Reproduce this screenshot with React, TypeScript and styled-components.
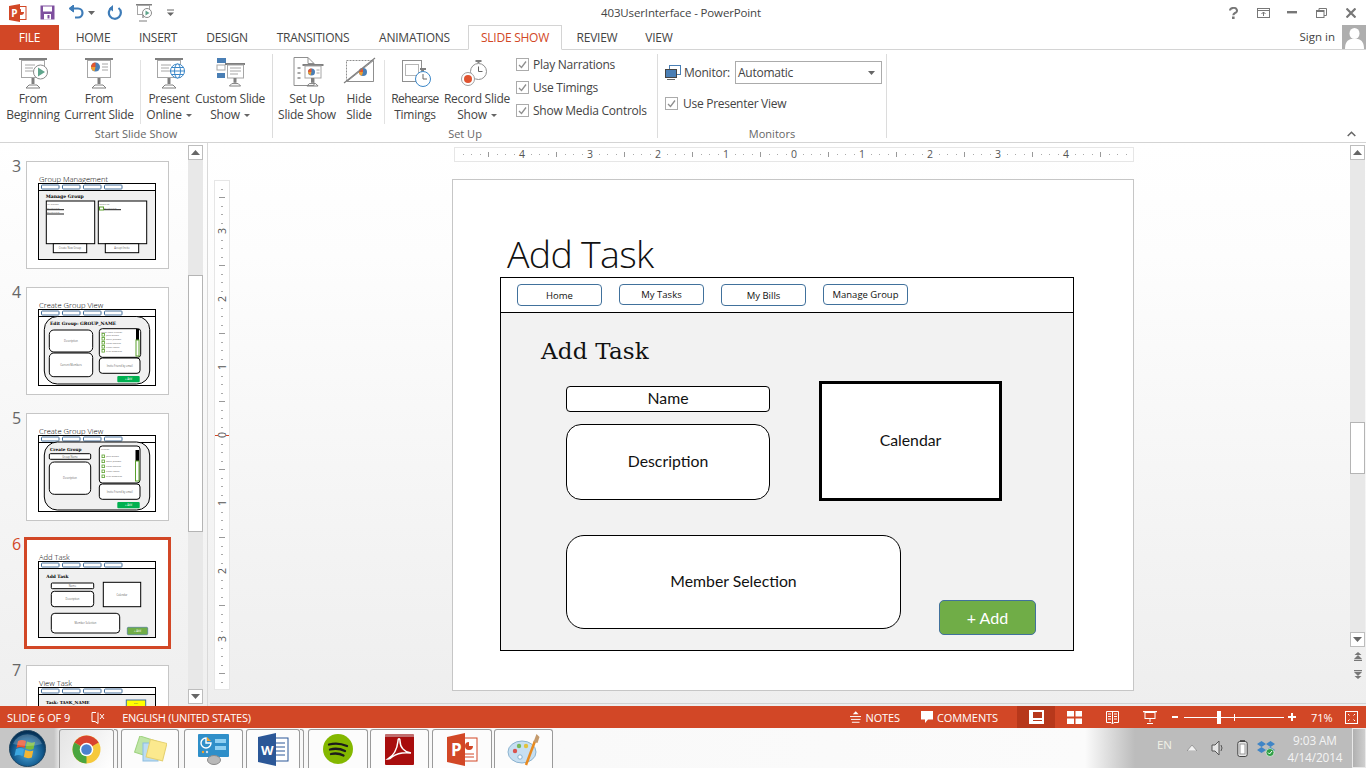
import React from "react";
import styled, { createGlobalStyle } from "styled-components";

const ORANGE = "#D24726";
const UI = `"Open Sans", "Noto Sans", "Liberation Sans", sans-serif`;

const Global = createGlobalStyle`
  html, body { margin: 0; padding: 0; overflow: hidden; background: #fff; }
  * { box-sizing: border-box; }
`;

const Page = styled.div`
  width: 1366px; height: 768px; display: flex; flex-direction: column; overflow: hidden;
  font-family: ${UI}; color: #444; background: #fff;
`;

/* Title bar */
const TitleBar = styled.div`
  height: 25px; flex: none; display: grid; grid-template-columns: 1fr auto 1fr; align-items: center;
`;
const QuickAccess = styled.div`display: flex; align-items: center; height: 25px;`;
const QuickIcon = styled.span<{ $w: number; $ml: number }>`
  display: flex; width: ${(p) => p.$w}px; margin-left: ${(p) => p.$ml}px; height: 20px; align-items: center; justify-content: center;
`;
const WindowTitle = styled.div`font-size: 11.5px; color: #444; letter-spacing: -0.14px; margin: -1px 0 0 -4px;`;
const WindowControls = styled.div`display: flex; justify-content: flex-end; align-items: center; height: 25px;`;
const ControlIcon = styled.span<{ $w: number; $ml: number }>`
  display: flex; width: ${(p) => p.$w}px; margin-left: ${(p) => p.$ml}px; justify-content: center; align-items: center;
`;

/* Tabs */
const TabBar = styled.div`
  height: 25px; flex: none; display: flex; border-bottom: 1px solid #d4d4d4; position: relative;
`;
const Tab = styled.div<{ $w: number; $active?: boolean }>`
  width: ${(p) => p.$w}px; height: 25px; display: flex; align-items: center; justify-content: center; font-size: 12px;
  color: ${(p) => (p.$active ? ORANGE : "#444")}; letter-spacing: -0.25px;
  ${(p) => p.$active && `border: 1px solid #d4d4d4; border-bottom: 1px solid #fff; background:#fff;`}
`;
const FileTab = styled(Tab)`background: ${ORANGE}; color: #fff; height: 25px;`;
const Account = styled.div`margin-left: auto; display: flex; align-items: flex-start; height: 24px; font-size: 11.5px;`;
const SignIn = styled.span`margin: 4px 7px 0 0; color: #444;`;
const Avatar = styled.span`width: 24px; height: 24px; background: #aeaeae; display: block; overflow: hidden;`;

/* Ribbon */
const Ribbon = styled.div`
  height: 93px; flex: none; display: flex; border-bottom: 1px solid #d4d4d4; position: relative;
`;
const Group = styled.div<{ $w: number }>`
  width: ${(p) => p.$w}px; height: 92px; flex: none; position: relative; display: flex; flex-direction: column;
  &::after { content: ""; position: absolute; right: 0; top: 4px; bottom: 4px; width: 1px; background: #dcdcdc; }
`;
const GroupBody = styled.div`flex: 1; display: flex; align-items: flex-start;`;
const GroupLabel = styled.div`height: 18px; font-size: 11px; text-align: center; color: #666; line-height: 20px; padding-right: 1px;`;
const BigButton = styled.div<{ $w: number }>`
  width: ${(p) => p.$w}px; flex: none; display: flex; flex-direction: column; align-items: center;
  font-size: 12px; line-height: 16px; text-align: center; color: #444; padding-top: 6px; letter-spacing: -0.25px;
`;
const BigIcon = styled.span`display: block; width: 34px; height: 34px; margin-bottom: 1px;`;
const BtnLine = styled.span<{ $tight?: boolean }>`
  display: block; white-space: nowrap; height: 16px; ${(p) => p.$tight && "letter-spacing: -0.6px;"}
`;
const Caret = styled.i`
  display: inline-block; margin-left: 4px; vertical-align: 2px; width: 0; height: 0;
  border-left: 3px solid transparent; border-right: 3px solid transparent; border-top: 3px solid #666;
`;
const RibbonSep = styled.span<{ $w: number }>`
  width: ${(p) => p.$w}px; flex: none; height: 64px; margin-top: 10px; display: flex; justify-content: center;
  &::before { content: ""; width: 1px; background: #e2e2e2; }
`;
const CheckColumn = styled.div`display: flex; flex-direction: column; gap: 7px; margin: 6px 0 0 0;`;
const CheckRow = styled.div`display: flex; align-items: center; font-size: 12px; color: #444; height: 16px; gap: 4px; letter-spacing: -0.25px; white-space: nowrap;`;
const PresenterRow = styled(CheckRow)`gap: 5px; letter-spacing: -0.28px;`;
const CheckBox = styled.span`
  width: 13px; height: 13px; flex: none; border: 1px solid #ababab; background: #fff; display: flex; align-items: center; justify-content: center;
`;
const MonitorBody = styled.div`flex: 1; padding: 11px 0 0 7px; display: flex; flex-direction: column; gap: 11px;`;
const MonitorRow = styled.div`display: flex; align-items: center; gap: 3px; font-size: 12px; height: 23px; letter-spacing: -0.25px;`;
const Select = styled.div`
  width: 147px; height: 23px; margin-left: 2px; border: 1px solid #ababab; display: flex; align-items: center; justify-content: space-between;
  padding: 0 6px 0 2px; background: #fff;
`;
const Collapse = styled.span`position: absolute; right: 10px; bottom: 5px; display: flex;`;

/* Main */
const Main = styled.div`flex: 1; min-height: 0; display: flex;`;
const ThumbPane = styled.div`
  width: 208px; flex: none; display: flex; border-right: 1px solid #d9d9d9;
  background: linear-gradient(#fff, #efefef);
`;
const ThumbList = styled.div`
  width: 188px; flex: none; padding-top: 18px; display: flex; flex-direction: column; gap: 18px; overflow: hidden;
`;
const ThumbRow = styled.div`display: flex; align-items: flex-start; flex: none; height: 108px;`;
const ThumbNo = styled.div<{ $active?: boolean }>`
  width: 26px; padding-left: 12px; font-size: 16px; line-height: 20px; margin-top: -5px; color: ${(p) => (p.$active ? ORANGE : "#666")};
`;
const Thumb = styled.div<{ $active?: boolean }>`
  width: 143px; height: 108px; background: #fff; flex: none;
  outline: ${(p) => (p.$active ? `3px solid ${ORANGE}` : "1px solid #c6c6c6")};
  outline-offset: -1px;
  & svg { display: block; }
`;
const PaneScroll = styled.div`
  width: 15px; flex: none; margin-top: 2px; height: 559px; background: #e8e8e8; display: flex; flex-direction: column;
`;
const ScrollBtn = styled.div`
  width: 15px; height: 15px; flex: none; background: #fff; border: 1px solid #bdbdbd; display: flex; align-items: center; justify-content: center;
`;
const ScrollTrack = styled.div`flex: 1; position: relative;`;
const ScrollThumb = styled.div<{ $top: number; $h: number }>`
  position: absolute; left: 0; top: ${(p) => p.$top}px; height: ${(p) => p.$h}px; width: 15px; background: #fff; border: 1px solid #b4b4b4;
`;

const Workspace = styled.div`
  flex: 1; min-width: 0; display: flex; flex-direction: column;
  background: linear-gradient(#fff 0%, #fdfdfd 20%, #eeeeee 100%);
`;
const WorkRow = styled.div`flex: 1; min-height: 0; display: flex; padding-left: 6px;`;
const VRulerBox = styled.div`width: 16px; height: 510px; margin-top: 37px; flex: none; border: 1px solid #e6e6e6; background: #fff;`;
const SlideColumn = styled.div`width: 682px; margin-left: 222px; flex: none; display: flex; flex-direction: column;`;
const HRulerBox = styled.div`width: 680px; height: 15px; margin: 4px 0 17px 2px; border: 1px solid #e6e6e6; background: #fff; flex: none;`;
const RightRail = styled.div`margin-left: auto; margin-right: 1px; width: 15px; padding-top: 2px; display: flex; flex-direction: column; align-items: center;`;
const RailTrack = styled.div`width: 15px; height: 472px; background: #e8e8e8; position: relative; flex: none;`;
const NavIcon = styled.span`display: flex; height: 18px; flex: none; align-items: center; justify-content: center;`;
const WorkRule = styled.div`height: 1px; background: #d2d2d2; margin: 0 0 2px 2px; flex: none;`;

/* Slide */
const Slide = styled.div`
  width: 682px; height: 512px; background: #fff; border: 1px solid #c6c6c6; position: relative; flex: none;
`;
const SlideTitle = styled.div`
  position: absolute; left: 54px; top: 49px; font-size: 37.5px; line-height: 50px; font-weight: 300; color: #111; letter-spacing: -0.7px;
`;
const Frame = styled.div`
  position: absolute; left: 47px; top: 97px; width: 574px; height: 374px; border: 1px solid #000; display: flex; flex-direction: column; background: #f2f2f2;
`;
const FrameNav = styled.div`
  height: 35px; flex: none; background: #fff; border-bottom: 1px solid #000; display: flex; align-items: flex-start; gap: 17px; padding: 6px 0 0 16px;
`;
const NavBtn = styled.div<{ $h: number }>`
  width: 85px; height: ${(p) => p.$h}px; border: 1px solid #41719c; border-radius: 4px; background: #fff;
  display: flex; align-items: center; justify-content: center; font: 9.5px "Open Sans", sans-serif; color: #111;
`;
const FrameBody = styled.div`flex: 1; position: relative;`;
const FrameHeading = styled.div`
  position: absolute; left: 40px; top: 21px; font: 23px/34px "DejaVu Serif", "Liberation Serif", serif; color: #111; white-space: nowrap; letter-spacing: 0.2px;
`;
const Shape = styled.div`
  position: absolute; background: #fff; border: 1px solid #000; display: flex; align-items: center; justify-content: center;
  font: 15.8px Lato, "Open Sans", sans-serif; color: #111; padding-bottom: 3px;
`;
const NameShape = styled(Shape)`left: 65px; top: 73px; width: 204px; height: 26px; border-radius: 4px;`;
const DescShape = styled(Shape)`left: 65px; top: 111px; width: 204px; height: 76px; border-radius: 15px;`;
const CalendarShape = styled(Shape)`left: 318px; top: 68px; width: 183px; height: 120px; border: 3px solid #000;`;
const MemberShape = styled(Shape)`left: 65px; top: 222px; width: 335px; height: 94px; border-radius: 18px;`;
const AddShape = styled(Shape)`
  left: 438px; top: 287px; width: 97px; height: 35px; border-radius: 5px; background: #70ad47; border: 1px solid #41719c; color: #fff; font-size: 16px;
  padding-bottom: 1px;
`;

/* Status bar */
const StatusBar = styled.div`
  height: 22px; flex: none; background: ${ORANGE}; color: #fff; display: flex; align-items: center; font-size: 11px; letter-spacing: -0.1px; white-space: nowrap;
`;
const StatusText = styled.span<{ $ml?: number }>`margin-left: ${(p) => p.$ml ?? 0}px;`;
const LangText = styled(StatusText)`letter-spacing: -0.25px;`;
const StatusIcon = styled.span<{ $ml?: number }>`display: flex; margin-left: ${(p) => p.$ml ?? 0}px;`;
const StatusRight = styled.div`margin-left: auto; display: flex; align-items: center; height: 22px; padding-right: 8px;`;
const StatusAction = styled.div<{ $mr: number }>`display: flex; align-items: center; gap: 4px; margin-right: ${(p) => p.$mr}px; width: ${(p) => (p.$mr === 21 ? 50 : 77)}px;`;
const ViewBtn = styled.div<{ $active?: boolean }>`
  width: 38px; height: 22px; display: flex; align-items: center; justify-content: center; background: ${(p) => (p.$active ? "#B7381B" : "transparent")};
`;
const ZoomMinus = styled.span`width: 6px; height: 2px; background: #fff; margin: 0 6px 0 3px;`;
const ZoomTrack = styled.div`width: 100px; height: 1px; background: #fff; position: relative;`;
const ZoomThumb = styled.span`position: absolute; left: 33px; top: -6px; width: 4px; height: 13px; background: #fff;`;
const ZoomTick = styled.span`position: absolute; left: 50px; top: -3px; width: 1px; height: 7px; background: #fff;`;
const ZoomPlus = styled.span`
  width: 8px; height: 8px; margin-left: 4px; position: relative;
  &::before { content: ""; position: absolute; left: 0; top: 3px; width: 8px; height: 2px; background: #fff; }
  &::after { content: ""; position: absolute; left: 3px; top: 0; width: 2px; height: 8px; background: #fff; }
`;
const ZoomValue = styled.span`margin-left: 15px; font-size: 11px; width: 34px;`;

/* Taskbar */
const Taskbar = styled.div`
  height: 40px; flex: none; display: flex; align-items: stretch;
  background: linear-gradient(90deg, #c6c6c6 0, #c6c6c6 54px, #f7f7f7 62px, #fbfbfb 1085px, #bcbcbc 1135px, #bcbcbc 100%);
`;
const Orb = styled.div`width: 59px; flex: none; padding: 2px 0 0 9px;`;
const TaskBtn = styled.div<{ $w: number; $ml: number; $hot?: boolean }>`
  width: ${(p) => p.$w}px; margin-left: ${(p) => p.$ml}px; flex: none; height: 39px; margin-top: 1px; border: 1px solid #9a9a9a; border-bottom: none;
  border-radius: 3px 3px 0 0; display: flex; align-items: center; justify-content: center; background: ${(p) => (p.$hot ? "linear-gradient(120deg,#e4e4e4,#fff)" : "#fcfcfc")};
  position: relative;
`;
const TaskStack = styled.span`position: absolute; right: -5px; top: -1px; bottom: 0; width: 4px; border: 1px solid #9a9a9a; border-left: none; border-bottom: none; border-radius: 0 3px 0 0;`;
const Tray = styled.div`margin-left: auto; display: flex; align-items: center; height: 40px;`;
const TrayText = styled.span`font-size: 11.5px; color: #f1f1e6; margin-right: 6px; margin-top: -7px;`;
const TrayIcon = styled.span<{ $w: number }>`display: flex; justify-content: center; width: ${(p) => p.$w}px;`;
const Clock = styled.div`width: 74px; text-align: center; font-size: 11.8px; line-height: 17px; color: #f4f4f4; padding-top: 2px; letter-spacing: -0.1px;`;
const ShowDesktop = styled.div`
  width: 14px; height: 40px; background: linear-gradient(90deg,#b0b0b0,#cfcfcf); border: 1px solid #e9e9e9;
`;

/* ---------- drawings ---------- */
const I = ({ children, w = 34, h = 34 }: { children: React.ReactNode; w?: number; h?: number }) => (
  <svg width={w} height={h} viewBox={`0 0 ${w} ${h}`} style={{ display: "block" }}>{children}</svg>
);
const Stand = ({ x = 16, y = 22, s = 1 }: { x?: number; y?: number; s?: number }) => (
  <g stroke="#7f7f7f" fill="none">
    <path d={`M${x} ${y}v${6 * s}`} strokeWidth="3" />
    <path d={`M${x - 7 * s} ${y + 10 * s}l${3 * s} -${3 * s}h${8 * s}l${3 * s} ${3 * s}z`} strokeWidth="1" />
  </g>
);
const Board = ({ lines = true }: { lines?: boolean }) => (
  <g transform="translate(1 0)">
    <rect x="2" y="2" width="28" height="2" fill="#7f7f7f" />
    <rect x="4.500" y="4.500" width="23" height="17" fill="#fff" stroke="#a6a6a6" />
    <Stand />
    {lines && <path d="M8 9h10M8 12h8M8 15h10" stroke="#a6a6a6" />}
  </g>
);
const Pie = ({ x, y, r = 4 }: { x: number; y: number; r?: number }) => (
  <g>
    <circle cx={x} cy={y} r={r} fill="#4a7fb5" />
    <path d={`M${x} ${y}V${y - r}A${r} ${r} 0 0 0 ${x - r} ${y}z`} fill="#e4572e" />
    <path d={`M${x} ${y}h-${r}A${r} ${r} 0 0 0 ${x - 1} ${y + r - 0.2}z`} fill="#f0a030" />
  </g>
);
const FromBeginningIcon = () => (
  <I>
    <Board />
    <circle cx="24.500" cy="16" r="7" fill="#fff" stroke="#8a8a8a" />
    <path d="M22 11.500l7 4.500-7 4.500z" fill="#5fa58c" />
  </I>
);
const FromCurrentIcon = () => (
  <I>
    <Board lines={false} />
    <Pie x={13.5} y={11} r={4.5} />
    <path d="M20 8h6M20 11h6M20 14h6" stroke="#a6a6a6" />
  </I>
);
const OnlineIcon = () => (
  <I>
    <Board />
    <g fill="#fff" stroke="#3b87c8">
      <circle cx="25.500" cy="15" r="7" />
      <ellipse cx="25.500" cy="15" rx="3" ry="7" />
      <path d="M18.500 15h14M19.500 11.500h12M19.500 18.500h12" />
    </g>
  </I>
);
const CustomIcon = () => (
  <I>
    <rect x="4" y="2" width="9" height="5" fill="#4a7fb5" />
    <rect x="4" y="9" width="8" height="5" fill="#fff" stroke="#a6a6a6" />
    <rect x="4" y="17" width="8" height="5" fill="#4a7fb5" />
    <rect x="12" y="7" width="20" height="2" fill="#7f7f7f" />
    <rect x="14.500" y="9" width="16" height="13" fill="#fff" stroke="#a6a6a6" />
    <path d="M17 12h11M17 15h11M17 18h8" stroke="#a6a6a6" />
    <Stand x={22} y={22} s={0.8} />
  </I>
);
const SetUpIcon = () => (
  <I>
    <g transform="translate(1.500 0)">
      <path d="M2.500 1.500h14l6 6v22h-20z" fill="#fff" stroke="#8f8f8f" />
      <path d="M16.500 1.500v6h6" fill="none" stroke="#8f8f8f" />
      <path d="M6 12h3M6 17h3M6 22h3" stroke="#a6a6a6" strokeWidth="2" />
      <rect x="11" y="8" width="21" height="2" fill="#7f7f7f" />
      <rect x="13.500" y="10" width="16" height="12" fill="#fff" stroke="#a6a6a6" />
      <Pie x={20} y={16} r={3.5} />
      <path d="M25 14h3M25 17h3" stroke="#a6a6a6" />
      <Stand x={21} y={22} s={0.8} />
    </g>
  </I>
);
const HideIcon = () => (
  <I>
    <rect x="4.500" y="4.500" width="27" height="21" fill="#fff" stroke="#8f8f8f" strokeDasharray="2 1" />
    <path d="M31.500 4.500v21H5z" fill="#fff" stroke="#8f8f8f" />
    <Pie x={21} y={16} r={4} />
    <path d="M2 27L33 2" stroke="#7f7f7f" strokeWidth="1.200" />
  </I>
);
const Watch = ({ x, y, c, r = 7.5 }: { x: number; y: number; c: string; r?: number }) => (
  <g>
    <path d={`M${x - 3} ${y - r - 2.5}h6M${x} ${y - r - 2.5}v2`} stroke="#7f7f7f" strokeWidth="2" />
    <circle cx={x} cy={y} r={r} fill="#fff" stroke={c} />
    <path d={`M${x} ${y - 5}v5h4`} fill="none" stroke="#666" />
  </g>
);
const RehearseIcon = () => (
  <I>
    <rect x="4.500" y="4.500" width="19" height="21" fill="#fff" stroke="#8f8f8f" />
    <rect x="7.500" y="8.500" width="13" height="11" fill="none" stroke="#b5b5b5" />
    <Watch x={25} y={23} c="#3b87c8" />
  </I>
);
const RecordIcon = () => (
  <I>
    <Watch x={18.5} y={15.5} c="#8f8f8f" r={8} />
    <circle cx="8" cy="23" r="6.500" fill="#fff" stroke="#9f9f9f" />
    <circle cx="8" cy="23" r="4" fill="#e0532f" />
  </I>
);
const Check = () => (
  <svg width="9" height="9" viewBox="0 0 9 9"><path d="M1 5l2.500 2.500L8 1.500" fill="none" stroke="#8e8e8e" strokeWidth="1.300" /></svg>
);
const SmallCaret = ({ c = "#666" }: { c?: string }) => (
  <svg width="7" height="4" viewBox="0 0 7 4"><path d="M0 0h7L3.500 4z" fill={c} /></svg>
);
const PptLogo = ({ s = 18 }: { s?: number }) => (
  <svg width={s} height={s} viewBox="0 0 18 18">
    <rect x="8" y="2.500" width="9" height="13" fill="#fff" stroke={ORANGE} />
    <path d="M12 5a3 3 0 1 0 3 3h-3z" fill={ORANGE} />
    <path d="M0 2l11-2v18L0 16z" fill={ORANGE} />
    <text x="2.200" y="13" fontFamily="Open Sans" fontWeight="700" fontSize="10" fill="#fff">P</text>
  </svg>
);
const SaveIcon = () => (
  <svg width="15" height="15" viewBox="0 0 15 15">
    <rect x="0.500" y="0.500" width="14" height="14" fill="#7e4f9e" />
    <rect x="3" y="1.500" width="9" height="5" fill="#fff" />
    <rect x="4" y="9" width="7" height="5.500" fill="#fff" />
    <rect x="7.500" y="10" width="2" height="3.500" fill="#7e4f9e" />
  </svg>
);
const UndoIcon = () => (
  <svg width="17" height="15" viewBox="0 0 17 15">
    <path d="M2 3.500h8a4.500 4.500 0 0 1 0 9H7" fill="none" stroke="#3e7cb8" strokeWidth="2.200" />
    <path d="M5.500 0L1 3.500 5.500 7z" fill="#3e7cb8" stroke="#3e7cb8" />
  </svg>
);
const RedoIcon = () => (
  <svg width="15" height="15" viewBox="0 0 15 15">
    <path d="M5 2.500A6 6 0 1 0 11.500 3" fill="none" stroke="#3e7cb8" strokeWidth="2.200" />
    <path d="M9 0v6.500l-4-3z" fill="#3e7cb8" transform="translate(-3 0)" />
  </svg>
);
const QuickShowIcon = () => (
  <svg width="17" height="18" viewBox="0 0 17 18">
    <rect x="0" y="0" width="16" height="1.500" fill="#7f7f7f" />
    <rect x="1.500" y="1.500" width="12" height="9" fill="#fff" stroke="#a6a6a6" />
    <circle cx="11" cy="9" r="4.500" fill="#fff" stroke="#8a8a8a" />
    <path d="M9.500 6.500l4 2.500-4 2.500z" fill="#5fa58c" />
    <path d="M7 11v3M3 17h8" stroke="#7f7f7f" strokeWidth="1.200" />
  </svg>
);
const CustomizeCaret = () => (
  <svg width="8" height="8" viewBox="0 0 8 8"><path d="M0 1h7" stroke="#666" /><path d="M0 3.500h7L3.500 7z" fill="#666" /></svg>
);
const HelpIcon = () => (
  <svg width="9" height="12" viewBox="0 0 9 12">
    <path d="M1 3.500a3.500 2.700 0 1 1 5 2.500C4.500 6.800 4.300 7.300 4.300 8.300" fill="none" stroke="#777" strokeWidth="2" />
    <rect x="3" y="9.500" width="2.600" height="2.500" fill="#777" />
  </svg>
);
const RibbonDisplayIcon = () => (
  <svg width="13" height="10" viewBox="0 0 13 10">
    <rect x="0.500" y="0.500" width="12" height="9" fill="none" stroke="#777" /><path d="M0 2.500h13" stroke="#777" />
    <path d="M6.500 4v4M4.500 6l2-2 2 2" fill="none" stroke="#777" />
  </svg>
);
const MinIcon = () => <svg width="10" height="3" viewBox="0 0 10 3"><rect width="10" height="2.400" fill="#777" /></svg>;
const RestoreIcon = () => (
  <svg width="11" height="10" viewBox="0 0 11 10">
    <rect x="0.500" y="2.500" width="7.500" height="7" fill="#fff" stroke="#777" /><path d="M3 2.500v-2h7.500v7H8" fill="none" stroke="#777" />
    <path d="M0 3.500h8" stroke="#777" />
  </svg>
);
const CloseIcon = () => (
  <svg width="10" height="10" viewBox="0 0 10 10"><path d="M0.500 0.500l9 9M9.500 0.500l-9 9" stroke="#777" strokeWidth="2.200" /></svg>
);
const AvatarArt = () => (
  <svg width="24" height="24" viewBox="0 0 24 24" style={{ display: "block" }}>
    <ellipse cx="12.500" cy="8.500" rx="5" ry="5.500" fill="#fff" />
    <path d="M3 24c0-6 2-9 6-10h7c4 1 6 4 6 10z" fill="#fff" />
  </svg>
);
const MonitorIcon = () => (
  <svg width="16" height="15" viewBox="0 0 16 15">
    <rect x="4.500" y="0.500" width="11" height="9" fill="#fff" stroke="#4a7fb5" />
    <rect x="0.500" y="4.500" width="11" height="8" fill="#4a7fb5" stroke="#444" />
    <path d="M2 14.500h8" stroke="#666" />
  </svg>
);
const Chevron = () => (
  <svg width="9" height="6" viewBox="0 0 9 6"><path d="M0.700 5l3.800-3.800L8.300 5" fill="none" stroke="#666" strokeWidth="1.500" /></svg>
);
const ArrowUp = () => <svg width="9" height="5" viewBox="0 0 9 5"><path d="M0 5h9L4.500 0z" fill="#666" /></svg>;
const ArrowDown = () => <svg width="9" height="5" viewBox="0 0 9 5"><path d="M0 0h9L4.500 5z" fill="#666" /></svg>;
const PrevSlide = () => (
  <svg width="8" height="9" viewBox="0 0 8 9"><path d="M4 0l3.500 3H0.500zM4 3l4 4H0zM0 7.800h8V9H0z" fill="#777" /></svg>
);
const NextSlide = () => (
  <svg width="8" height="9" viewBox="0 0 8 9"><path d="M0 0h8v1.200H0zM0 2h8L4 6zM0.500 6h7L4 9z" fill="#777" /></svg>
);

const HRuler = () => {
  const marks: React.ReactNode[] = [];
  for (let i = -40; i <= 40; i++) {
    const x = 339 + i * 8.5;
    if (x < 2 || x > 676) continue;
    if (i % 8 === 0) {
      marks.push(<text key={i} x={x} y="10" textAnchor="middle" fontSize="10.5" fontFamily="Open Sans" fill="#555">{Math.abs(i / 8)}</text>);
    } else if (i % 4 === 0) {
      marks.push(<rect key={i} x={Math.round(x)} y="4" width="1" height="5" fill="#999" />);
    } else {
      marks.push(<rect key={i} x={Math.round(x)} y="6" width="1" height="1" fill="#aaa" />);
    }
  }
  return <svg width="678" height="13" style={{ display: "block" }}>{marks}</svg>;
};
const VRuler = () => {
  const marks: React.ReactNode[] = [];
  for (let i = -30; i <= 30; i++) {
    const y = 254 + i * 8.5;
    if (y < 4 || y > 505) continue;
    if (i % 8 === 0) {
      marks.push(
        <text key={i} x="7" y={y} textAnchor="middle" fontSize="10.5" fontFamily="Open Sans" fill="#555" transform={`rotate(-90 7 ${y})`} dominantBaseline="central">{Math.abs(i / 8)}</text>
      );
    } else if (i % 4 === 0) {
      marks.push(<rect key={i} x="4" y={Math.round(y)} width="6" height="1" fill="#999" />);
    } else {
      marks.push(<rect key={i} x="6" y={Math.round(y)} width="2" height="1" fill="#aaa" />);
    }
  }
  return <svg width="14" height="508" style={{ display: "block" }}>{marks}<rect x="0" y="254" width="3" height="1" fill={ORANGE} /><rect x="11" y="254" width="3" height="1" fill={ORANGE} /></svg>;
};

/* thumbnails */
const TITLE = "Open Sans";
const TBase = ({ title, rounded = false, children }: { title: string; rounded?: boolean; children?: React.ReactNode }) => (
  <svg width="143" height="108" viewBox="0 0 143 108">
    <text x="13" y="21" fontSize="7.6" fontWeight="300" fontFamily={TITLE} fill="#000">{title}</text>
    <rect x="12.500" y="22.500" width="117" height="76" fill={rounded ? "#fff" : "#f0f0f0"} stroke="#000" />
    <rect x="13" y="23" width="116" height="6" fill="#fff" />
    <path d="M12.500 29.500h117" stroke="#000" />
    {[[15.5, 17.5], [36.5, 17.5], [57.5, 17.5], [78.5, 17.5]].map(([x, w]) => (
      <rect key={x} x={x} y="24" width={w} height="4" rx="0.7" fill="#fff" stroke="#2f5f8f" strokeWidth="0.9" />
    ))}
    {children}
  </svg>
);
const TBox = ({ x, y, w, h, r = 0, sw = 1, t, fs = 2.6 }: { x: number; y: number; w: number; h: number; r?: number; sw?: number; t?: string; fs?: number }) => (
  <g>
    <rect x={x} y={y} width={w} height={h} rx={r} fill="#fff" stroke="#000" strokeWidth={sw} />
    {t && <text x={x + w / 2} y={y + h / 2 + 1} textAnchor="middle" fontSize={fs} fontFamily={TITLE} fill="#666">{t}</text>}
  </g>
);
const THead = ({ x, y, t, fs }: { x: number; y: number; t: string; fs: number }) => (
  <text x={x} y={y} fontSize={fs} fontWeight="700" fontFamily="DejaVu Serif" fill="#000">{t}</text>
);
const TGreen = ({ x, y, w, h, c = "#00b050", stroke }: { x: number; y: number; w: number; h: number; c?: string; stroke?: string }) => (
  <g>
    <rect x={x} y={y} width={w} height={h} rx="1" fill={c} stroke={stroke} strokeWidth="0.6" />
    <text x={x + w / 2} y={y + h / 2 + 1} textAnchor="middle" fontSize="2.6" fontFamily={TITLE} fill="#fff">+ Add</text>
  </g>
);
const TList = ({ x, y, n, h = 4 }: { x: number; y: number; n: string[]; h?: number }) => (
  <g>
    {n.map((t, i) => (
      <g key={t}>
        <rect x={x} y={y + i * h} width="2.500" height="2.600" fill="#fff" stroke="#5aa02c" strokeWidth="0.8" />
        <text x={x + 4} y={y + i * h + 2.2} fontSize="2.3" fontFamily={TITLE} fill="#666">{t}</text>
      </g>
    ))}
  </g>
);
const names = ["John Burton", "Steve Johnson", "Linda Roberts", "Penny Smith", "Tyler Browning"];
const Thumb3 = () => (
  <TBase title="Group Management">
    <THead x={19.7} y={37} t="Manage Group" fs={4.6} />
    <TBox x={20.3} y={40} w={48.4} h={42.7} />
    <text x="21" y="44" fontSize="2.300" fontFamily={TITLE} fill="#666">My groups:</text>
    <text x="21" y="48" fontSize="2.300" fontFamily={TITLE} fill="#666">BAATHAN'S</text>
    <path d="M21 48.700h17M21 53h17" stroke="#000" strokeWidth="0.9" />
    <text x="21" y="52.300" fontSize="2.300" fontFamily={TITLE} fill="#666">BAATHAN'S</text>
    <TBox x={72.3} y={40} w={48.4} h={42.7} />
    <text x="73" y="44" fontSize="2.300" fontFamily={TITLE} fill="#666">Invited to:</text>
    <rect x="73.500" y="46" width="4" height="3" fill="#fff" stroke="#5aa02c" />
    <text x="78" y="48" fontSize="2.300" fontFamily={TITLE} fill="#666">BAATHAN'S</text>
    <path d="M78 48.700h17" stroke="#000" strokeWidth="0.9" />
    <TBox x={27.3} y={82.7} w={33.4} h={9} t="Create New Group" />
    <TBox x={79.3} y={82.7} w={33.4} h={9} t="Accept Invite" />
  </TBase>
);
const BigRound = ({ y }: { y: number }) => (
  <rect x="18.300" y={y} width="105.400" height={97 - y} rx="13" fill="#f0f0f0" stroke="#000" />
);
const Thumb4 = () => (
  <TBase title="Create Group View" rounded>
    <BigRound y={29.5} />
    <THead x={24} y={37.7} t="Edit Group: GROUP_NAME" fs={4.4} />
    <TBox x={23.3} y={43} w={43.4} h={22} r={4.5} t="Description" />
    <TBox x={23.3} y={66} w={43.4} h={23.7} r={4.5} t="Current Members" />
    <TBox x={73.3} y={41.7} w={41.4} h={28.6} r={3} />
    <text x="75" y="45.500" fontSize="2.300" fontFamily={TITLE} fill="#666">Invite More Friends:</text>
    <rect x="110" y="42" width="3" height="11" fill="#000" />
    <rect x="110" y="53" width="3" height="16" fill="#fff" stroke="#5aa02c" />
    <TList x={76} y={46.5} n={names} />
    <TBox x={73.3} y={71} w={40.7} h={15.3} r={3} t="Invite Friend by email" />
    <TGreen x={91.3} y={89} w={22.4} h={6.3} />
  </TBase>
);
const Thumb5 = () => (
  <TBase title="Create Group View" rounded>
    <BigRound y={29} />
    <THead x={24} y={37.7} t="Create Group" fs={4.2} />
    <TBox x={23.3} y={40.7} w={41.4} h={5.6} r={1.2} t="Group Name" />
    <TBox x={23.3} y={49} w={41.4} h={32.3} r={5} t="Description" />
    <TBox x={73.3} y={33} w={40.7} h={37} r={3} />
    <text x="75" y="37" fontSize="2.300" fontFamily={TITLE} fill="#666">Friends:</text>
    <rect x="109.500" y="37" width="3.500" height="11" fill="#000" />
    <rect x="109.500" y="48" width="3.500" height="20" fill="#fff" stroke="#5aa02c" />
    <TList x={76} y={42} n={names} h={5} />
    <TBox x={73.3} y={71} w={40.7} h={15.3} r={3} t="Invite Friend by email" />
    <TGreen x={91.3} y={89} w={22.4} h={6.3} />
  </TBase>
);
const Thumb6 = () => (
  <TBase title="Add Task">
    <THead x={20.3} y={39} t="Add Task" fs={4.4} />
    <TBox x={25.3} y={44} w={42.4} h={5.7} r={1} t="Name" />
    <TBox x={25.3} y={52.3} w={42.4} h={15.4} r={3} t="Description" />
    <TBox x={77.3} y={43.3} w={37.4} h={24.4} t="Calendar" />
    <TBox x={25.3} y={74.3} w={68.4} h={19.7} r={3.5} t="Member Selection" />
    <TGreen x={101.3} y={88.3} w={20.4} h={7.4} c="#70ad47" stroke="#41719c" />
  </TBase>
);
const Thumb7 = () => (
  <TBase title="View Task">
    <THead x={20} y={38.7} t="Task: TASK_NAME" fs={4.2} />
    <rect x="100.300" y="35" width="19.400" height="20" fill="#ffff00" stroke="#41719c" />
    <text x="110" y="39" textAnchor="middle" fontSize="2.400" fontFamily={TITLE} fill="#666">Edit</text>
  </TBase>
);

/* taskbar art */
const OrbArt = () => (
  <svg width="37" height="37" viewBox="0 0 37 37" style={{ display: "block" }}>
    <defs>
      <radialGradient id="orb" cx="50%" cy="62%" r="58%"><stop offset="0" stopColor="#4ea7d8" /><stop offset="0.7" stopColor="#125a8e" /><stop offset="1" stopColor="#062f53" /></radialGradient>
    </defs>
    <circle cx="18.500" cy="18.500" r="18" fill="url(#orb)" stroke="#1f4662" />
    <path d="M9 11q4-2 8 0l-1.500 7q-4-2-8 0z" fill="#e8502c" />
    <path d="M18 11.500q4 2 8 0.500l-1.500 7q-4 1.500-8-0.500z" fill="#79bb3c" />
    <path d="M7 19q4-2 8 0l-1.500 7q-4-2-8 0z" fill="#3da7e0" />
    <path d="M16.300 20q4 2 8 0.500l-1.500 7q-4 1.500-8-0.500z" fill="#f4b632" />
    <path d="M4 14a15 13 0 0 1 29 0q-14 4-29 0z" fill="#fff" opacity="0.22" />
  </svg>
);
const ChromeArt = () => (
  <svg width="29" height="29" viewBox="0 0 29 29">
    <circle cx="14.500" cy="14.500" r="14" fill="#f6c93c" />
    <path d="M14.500 14.500L2.400 7.500A14 14 0 0 1 26.600 7.500z" fill="#d8432f" />
    <path d="M14.500 14.500L2.400 7.500A14 14 0 0 0 14.500 28.500z" fill="#4aa53f" />
    <circle cx="14.500" cy="14.500" r="6.800" fill="#fff" />
    <circle cx="14.500" cy="14.500" r="5.300" fill="#4c82cf" />
  </svg>
);
const StickyArt = () => (
  <svg width="33" height="27" viewBox="0 0 33 27">
    <rect x="3" y="2" width="17" height="17" fill="#bfe5a6" stroke="#9ed27f" transform="rotate(18 11 10)" />
    <rect x="9" y="7" width="15" height="18" fill="#bcdcf2" stroke="#8cbde0" />
    <rect x="14" y="5" width="17" height="18" fill="#fbe98e" stroke="#e4d070" transform="rotate(14 22 14)" />
  </svg>
);
const PanelArt = () => (
  <svg width="33" height="32" viewBox="0 0 33 32">
    <rect x="1" y="1" width="31" height="23" rx="1" fill="#2f8fc9" />
    <path d="M9 5a5 5 0 1 0 5 5H9z" fill="none" stroke="#fff" strokeWidth="1.400" />
    <path d="M10 4l4 4h-4z" fill="#f3a430" />
    <rect x="18" y="6" width="11" height="4" fill="#8fd0f2" /><rect x="18" y="13" width="11" height="4" fill="#8fd0f2" />
    <circle cx="6" cy="19" r="1.200" fill="#f3a430" /><circle cx="10" cy="19" r="1.200" fill="#cde" />
    <ellipse cx="17" cy="27" rx="6.500" ry="4.500" fill="#b9b9b9" stroke="#8a8a8a" />
  </svg>
);
const WordArt = () => (
  <svg width="31" height="33" viewBox="0 0 31 33">
    <rect x="11" y="5" width="19" height="23" fill="#fff" stroke="#2b5797" />
    <path d="M17 10h10M17 14h10M17 18h10M17 22h10" stroke="#2b5797" />
    <path d="M0 4l18-4v33L0 29z" fill="#2b5797" />
    <text x="3" y="21.500" fontFamily="Open Sans" fontWeight="700" fontSize="13" fill="#fff">W</text>
  </svg>
);
const SpotifyArt = () => (
  <svg width="30" height="30" viewBox="0 0 30 30">
    <circle cx="15" cy="15" r="15" fill="#84b800" />
    <path d="M6 10.500q9-2.500 18 1.500M7 15.500q8-2 15 1.500M8 20q7-1.500 12.500 1.500" fill="none" stroke="#1c1c1c" strokeWidth="2.300" strokeLinecap="round" />
  </svg>
);
const AcrobatArt = () => (
  <svg width="31" height="33" viewBox="0 0 31 33">
    <rect x="1" y="1" width="29" height="31" rx="1" fill="#a80d0d" />
    <rect x="1" y="1" width="29" height="3" fill="#d9d0d0" opacity="0.5" />
    <path d="M4 26c5-3 9-9 10-18 0-3 2-3 2 0 0 6 4 11 11 12-8-1-15 1-19 4-2 2-4 2-4 2z" fill="none" stroke="#fff" strokeWidth="1.500" />
  </svg>
);
const PptArt = () => (
  <svg width="31" height="33" viewBox="0 0 31 33">
    <rect x="13" y="5" width="17" height="23" fill="#fff" stroke={ORANGE} />
    <path d="M22 9a4 4 0 1 0 4 4h-4z" fill={ORANGE} /><path d="M17 21h10M17 24h10" stroke={ORANGE} />
    <path d="M0 4l18-4v33L0 29z" fill={ORANGE} />
    <text x="4" y="23" fontFamily="Open Sans" fontWeight="700" fontSize="17" fill="#fff">P</text>
  </svg>
);
const PaintArt = () => (
  <svg width="33" height="33" viewBox="0 0 33 33">
    <ellipse cx="15" cy="19" rx="14" ry="11" fill="#c7dff1" stroke="#8ab2cf" />
    <circle cx="8" cy="18" r="2.200" fill="#d9534f" /><circle cx="12" cy="13" r="2.200" fill="#77b85a" />
    <circle cx="19" cy="13" r="2.200" fill="#e2c23e" /><circle cx="13" cy="24" r="2.200" fill="#fff" stroke="#8ab2cf" />
    <path d="M19 32L28 8" stroke="#e88a1f" strokeWidth="2.500" />
    <path d="M26.500 9l3-8 3 3-2 6z" fill="#c49a6c" />
  </svg>
);
const SpeakerIcon = () => (
  <svg width="14" height="16" viewBox="0 0 14 16">
    <path d="M1 5h3l4-4v14l-4-4H1z" fill="#e6e6e6" stroke="#555" />
    <path d="M10 5q2 3 0 6" fill="none" stroke="#555" />
  </svg>
);
const BatteryIcon = () => (
  <svg width="11" height="17" viewBox="0 0 11 17">
    <rect x="3" y="0" width="5" height="2" fill="#555" />
    <rect x="0.800" y="1.500" width="9.400" height="15" rx="2" fill="#e8e8e8" stroke="#444" />
    <rect x="3" y="4" width="5" height="10" fill="#fff" stroke="#999" />
  </svg>
);
const DropboxIcon = () => (
  <svg width="18" height="17" viewBox="0 0 18 17">
    <path d="M4.500 1L9 4 4.500 7 0 4zM13.500 1L18 4l-4.500 3L9 4zM4.500 7L9 10l-4.500 3L0 10zM13.500 7L18 10l-4.500 3L9 10z" fill="#3f85c6" />
    <circle cx="13" cy="12.500" r="4" fill="#2f9e44" stroke="#fff" strokeWidth="0.600" />
    <path d="M11 12.500l1.500 1.500 2.500-3" fill="none" stroke="#fff" strokeWidth="1" />
  </svg>
);
const BookIcon = () => (
  <svg width="15" height="15" viewBox="0 0 15 15">
    <path d="M1.500 1.500h12v11h-4.500l-1.500 1.500-1.500-1.500H1.500z" fill="none" stroke="#fff" />
    <path d="M7.500 1.500v12" stroke="#fff" /><path d="M3 4h3M3 6.500h3M3 9h3M9 4h3M9 6.500h3M9 9h3" stroke="#fff" />
  </svg>
);
const NotesIcon = () => (
  <svg width="12" height="13" viewBox="0 0 12 13"><path d="M6 0L9 3H3z" fill="#fff" /><path d="M0 5.500h12M1 8.500h10M2 11.500h8" stroke="#fff" /></svg>
);
const CommentIcon = () => (
  <svg width="12" height="12" viewBox="0 0 12 12"><path d="M0 0h12v8.500H7L4 12V8.500H0z" fill="#fff" /></svg>
);
const LangIcon = () => (
  <svg width="14" height="13" viewBox="0 0 14 13">
    <path d="M5 1.500H1v9h3l3 2V1.500" fill="none" stroke="#fff" />
    <path d="M9 3l4 5M13 3L9 8" stroke="#fff" />
  </svg>
);
const NormalViewIcon = () => (
  <svg width="15" height="14" viewBox="0 0 15 14"><rect width="15" height="14" fill="#fff" /><rect x="4" y="2" width="9" height="6" fill="#B7381B" /><rect x="4" y="10" width="9" height="1" fill="#B7381B" /></svg>
);
const SorterIcon = () => (
  <svg width="15" height="13" viewBox="0 0 15 13"><rect width="7" height="5.500" fill="#fff" /><rect x="8.500" width="6.500" height="5.500" fill="#fff" /><rect y="7.500" width="7" height="5.500" fill="#fff" /><rect x="8.500" y="7.500" width="6.500" height="5.500" fill="#fff" /></svg>
);
const ShowViewIcon = () => (
  <svg width="14" height="13" viewBox="0 0 14 13"><path d="M0 0.500h14" stroke="#fff" strokeWidth="1.500" /><rect x="2" y="1.500" width="10" height="6" fill="none" stroke="#fff" /><path d="M7 8v3M4 12.500h6" stroke="#fff" /></svg>
);
const FitIcon = () => (
  <svg width="13" height="13" viewBox="0 0 13 13"><rect x="0.500" y="0.500" width="12" height="12" fill="none" stroke="#fff" /><path d="M3 3l1.500 1.500M10 3L8.500 4.500M3 10l1.500-1.500M10 10L8.500 8.500" stroke="#fff" /></svg>
);
const TrayArrow = () => <svg width="10" height="6" viewBox="0 0 10 6"><path d="M0 6h10L5 0z" fill="#f2f2f2" stroke="#666" strokeWidth="0.500" /></svg>;

const NavButtons: [string, number][] = [["Home", 22], ["My Tasks", 21], ["My Bills", 22], ["Manage Group", 21]];
const thumbs: [number, React.ReactNode][] = [[3, <Thumb3 />], [4, <Thumb4 />], [5, <Thumb5 />], [6, <Thumb6 />], [7, <Thumb7 />]];
const tabs: [string, number][] = [["HOME", 68], ["INSERT", 62], ["DESIGN", 76], ["TRANSITIONS", 96], ["ANIMATIONS", 107]];

export default function App() {
  return (
    <Page>
      <Global />
      <TitleBar>
        <QuickAccess>
          <QuickIcon $w={18} $ml={9}><PptLogo /></QuickIcon>
          <QuickIcon $w={15} $ml={13}><SaveIcon /></QuickIcon>
          <QuickIcon $w={17} $ml={13}><UndoIcon /></QuickIcon>
          <QuickIcon $w={7} $ml={3}><SmallCaret /></QuickIcon>
          <QuickIcon $w={15} $ml={12}><RedoIcon /></QuickIcon>
          <QuickIcon $w={17} $ml={14}><QuickShowIcon /></QuickIcon>
          <QuickIcon $w={8} $ml={14}><CustomizeCaret /></QuickIcon>
        </QuickAccess>
        <WindowTitle>403UserInterface - PowerPoint</WindowTitle>
        <WindowControls>
          <ControlIcon $w={9} $ml={0}><HelpIcon /></ControlIcon>
          <ControlIcon $w={13} $ml={19}><RibbonDisplayIcon /></ControlIcon>
          <ControlIcon $w={10} $ml={17}><MinIcon /></ControlIcon>
          <ControlIcon $w={11} $ml={19}><RestoreIcon /></ControlIcon>
          <ControlIcon $w={10} $ml={19}><CloseIcon /></ControlIcon>
          <ControlIcon $w={10} $ml={0} />
        </WindowControls>
      </TitleBar>

      <TabBar>
        <FileTab $w={59}>FILE</FileTab>
        {tabs.map(([t, w]) => <Tab key={t} $w={w}>{t}</Tab>)}
        <Tab $w={94} $active>SLIDE SHOW</Tab>
        <Tab $w={70}>REVIEW</Tab>
        <Tab $w={54}>VIEW</Tab>
        <Account>
          <SignIn>Sign in</SignIn>
          <Avatar><AvatarArt /></Avatar>
        </Account>
      </TabBar>

      <Ribbon>
        <Group $w={273}>
          <GroupBody>
            <BigButton $w={66}><BigIcon><FromBeginningIcon /></BigIcon><BtnLine>From</BtnLine><BtnLine>Beginning</BtnLine></BigButton>
            <BigButton $w={66}><BigIcon><FromCurrentIcon /></BigIcon><BtnLine>From</BtnLine><BtnLine>Current Slide</BtnLine></BigButton>
            <RibbonSep $w={16} />
            <BigButton $w={42}><BigIcon><OnlineIcon /></BigIcon><BtnLine>Present</BtnLine><BtnLine>Online<Caret /></BtnLine></BigButton>
            <BigButton $w={80}><BigIcon><CustomIcon /></BigIcon><BtnLine>Custom Slide</BtnLine><BtnLine>Show<Caret /></BtnLine></BigButton>
          </GroupBody>
          <GroupLabel>Start Slide Show</GroupLabel>
        </Group>
        <Group $w={385}>
          <GroupBody>
            <BigButton $w={68}><BigIcon><SetUpIcon /></BigIcon><BtnLine>Set Up</BtnLine><BtnLine>Slide Show</BtnLine></BigButton>
            <BigButton $w={36}><BigIcon><HideIcon /></BigIcon><BtnLine>Hide</BtnLine><BtnLine>Slide</BtnLine></BigButton>
            <RibbonSep $w={15} />
            <BigButton $w={46}><BigIcon><RehearseIcon /></BigIcon><BtnLine $tight>Rehearse</BtnLine><BtnLine>Timings</BtnLine></BigButton>
            <BigButton $w={78}><BigIcon><RecordIcon /></BigIcon><BtnLine>Record Slide</BtnLine><BtnLine>Show<Caret /></BtnLine></BigButton>
            <CheckColumn>
              <CheckRow><CheckBox><Check /></CheckBox>Play Narrations</CheckRow>
              <CheckRow><CheckBox><Check /></CheckBox>Use Timings</CheckRow>
              <CheckRow><CheckBox><Check /></CheckBox>Show Media Controls</CheckRow>
            </CheckColumn>
          </GroupBody>
          <GroupLabel>Set Up</GroupLabel>
        </Group>
        <Group $w={229}>
          <MonitorBody>
            <MonitorRow><MonitorIcon />Monitor:<Select>Automatic<SmallCaret /></Select></MonitorRow>
            <PresenterRow><CheckBox><Check /></CheckBox>Use Presenter View</PresenterRow>
          </MonitorBody>
          <GroupLabel>Monitors</GroupLabel>
        </Group>
        <Collapse><Chevron /></Collapse>
      </Ribbon>

      <Main>
        <ThumbPane>
          <ThumbList>
            {thumbs.map(([n, art]) => (
              <ThumbRow key={n}>
                <ThumbNo $active={n === 6}>{n}</ThumbNo>
                <Thumb $active={n === 6}>{art}</Thumb>
              </ThumbRow>
            ))}
          </ThumbList>
          <PaneScroll>
            <ScrollBtn><ArrowUp /></ScrollBtn>
            <ScrollTrack><ScrollThumb $top={115} $h={257} /></ScrollTrack>
            <ScrollBtn><ArrowDown /></ScrollBtn>
          </PaneScroll>
        </ThumbPane>
        <Workspace>
          <WorkRow>
            <VRulerBox><VRuler /></VRulerBox>
            <SlideColumn>
              <HRulerBox><HRuler /></HRulerBox>
              <Slide>
                <SlideTitle>Add Task</SlideTitle>
                <Frame>
                  <FrameNav>
                    {NavButtons.map(([t, h]) => <NavBtn key={t} $h={h}>{t}</NavBtn>)}
                  </FrameNav>
                  <FrameBody>
                    <FrameHeading>Add Task</FrameHeading>
                    <NameShape>Name</NameShape>
                    <DescShape>Description</DescShape>
                    <CalendarShape>Calendar</CalendarShape>
                    <MemberShape>Member Selection</MemberShape>
                    <AddShape>+ Add</AddShape>
                  </FrameBody>
                </Frame>
              </Slide>
            </SlideColumn>
            <RightRail>
              <ScrollBtn><ArrowUp /></ScrollBtn>
              <RailTrack><ScrollThumb $top={262} $h={52} /></RailTrack>
              <ScrollBtn><ArrowDown /></ScrollBtn>
              <NavIcon><PrevSlide /></NavIcon>
              <NavIcon><NextSlide /></NavIcon>
            </RightRail>
          </WorkRow>
          <WorkRule />
        </Workspace>
      </Main>

      <StatusBar>
        <StatusText $ml={7}>SLIDE 6 OF 9</StatusText>
        <StatusIcon $ml={21}><LangIcon /></StatusIcon>
        <LangText $ml={17}>ENGLISH (UNITED STATES)</LangText>
        <StatusRight>
          <StatusAction $mr={21}><NotesIcon />NOTES</StatusAction>
          <StatusAction $mr={19}><CommentIcon />COMMENTS</StatusAction>
          <ViewBtn $active><NormalViewIcon /></ViewBtn>
          <ViewBtn><SorterIcon /></ViewBtn>
          <ViewBtn><BookIcon /></ViewBtn>
          <ViewBtn><ShowViewIcon /></ViewBtn>
          <ZoomMinus />
          <ZoomTrack><ZoomThumb /><ZoomTick /></ZoomTrack>
          <ZoomPlus />
          <ZoomValue>71%</ZoomValue>
          <StatusIcon><FitIcon /></StatusIcon>
        </StatusRight>
      </StatusBar>

      <Taskbar>
        <Orb><OrbArt /></Orb>
        <TaskBtn $w={55} $ml={0} $hot><ChromeArt /><TaskStack /></TaskBtn>
        <TaskBtn $w={58} $ml={7}><StickyArt /></TaskBtn>
        <TaskBtn $w={59} $ml={5}><PanelArt /></TaskBtn>
        <TaskBtn $w={54} $ml={3}><WordArt /><TaskStack /></TaskBtn>
        <TaskBtn $w={60} $ml={8}><SpotifyArt /></TaskBtn>
        <TaskBtn $w={59} $ml={2}><AcrobatArt /></TaskBtn>
        <TaskBtn $w={60} $ml={3}><PptArt /></TaskBtn>
        <TaskBtn $w={59} $ml={2}><PaintArt /></TaskBtn>
        <Tray>
          <TrayText>EN</TrayText>
          <TrayIcon $w={28}><TrayArrow /></TrayIcon>
          <TrayIcon $w={24}><SpeakerIcon /></TrayIcon>
          <TrayIcon $w={24}><BatteryIcon /></TrayIcon>
          <TrayIcon $w={24}><DropboxIcon /></TrayIcon>
          <Clock>9:03 AM<br />4/14/2014</Clock>
          <ShowDesktop />
        </Tray>
      </Taskbar>
    </Page>
  );
}
